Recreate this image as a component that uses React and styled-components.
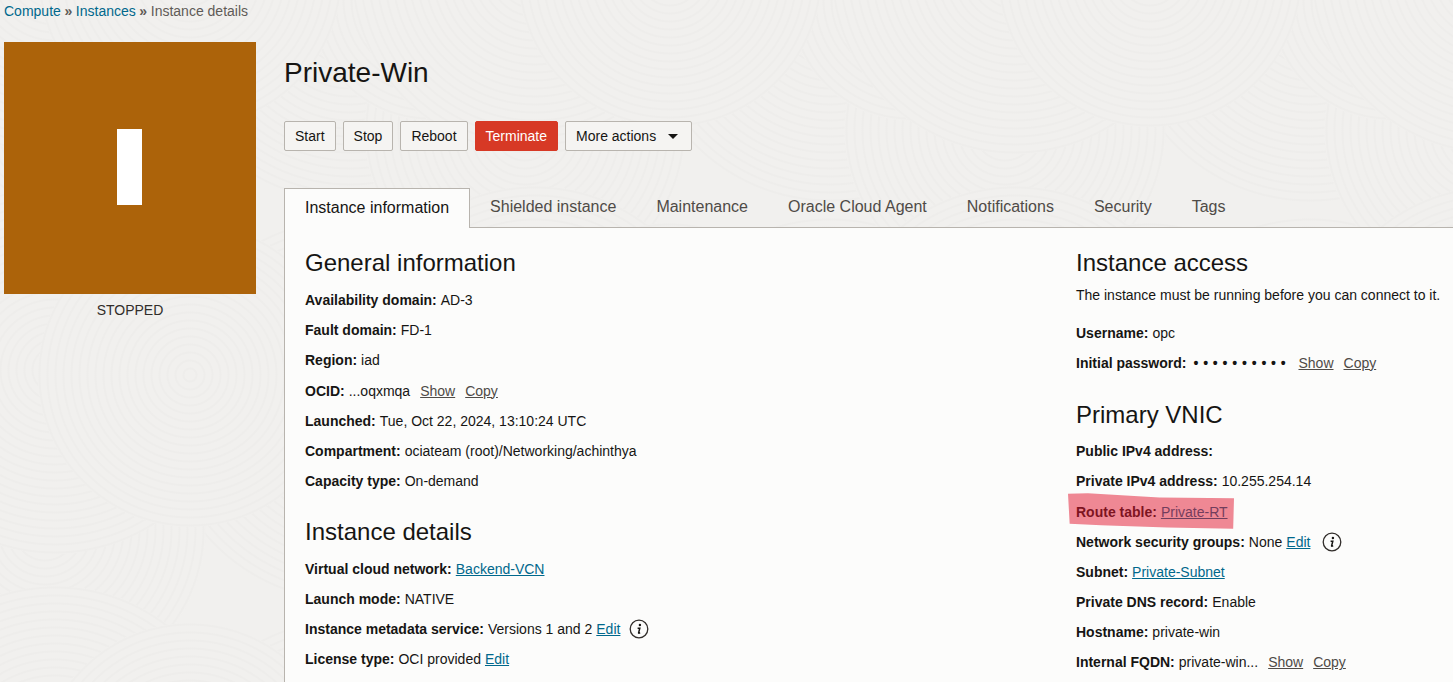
import React from "react";
import styled, { createGlobalStyle } from "styled-components";

// background swirl: opaque disc of faint rings, so later discs sit under earlier ones
const swirl = (radius) => {
  const stops = [];
  for (let r = 0; r < radius; r += 8) {
    stops.push(`#f1f0ee ${r}px ${r + 5}px`, `#eeedeb ${r + 6}px ${r + 7}px`, `#f1f0ee ${r + 8}px`);
  }
  stops.push(`#f1f0ee ${radius}px`, `rgba(241,240,238,0) ${radius + 1}px`);
  return `radial-gradient(circle at center, ${stops.join(", ")})`;
};

const GlobalStyle = createGlobalStyle`
  html, body {
    margin: 0;
    height: 682px;
    overflow: hidden;
  }
  body {
    font-family: "Liberation Sans", Arial, sans-serif;
    font-size: 14px;
    color: #161513;
    background-color: #f1f0ee;
  }
`;

const Page = styled.div`
  height: 682px;
  overflow: hidden;
  display: flex;
  flex-direction: column;
  padding-left: 4px;
  background-color: #f1f0ee;
  background-size: 480px 400px;
  background-image: ${swirl(150)}, ${swirl(180)}, ${swirl(120)}, ${swirl(160)}, ${swirl(190)};
  background-position:
    -50px 175px,
    -185px 170px,
    190px -200px,
    -195px -70px,
    110px -190px;
`;

const Breadcrumbs = styled.nav`
  display: flex;
  align-items: center;
  height: 22px;
  margin-bottom: 20px;
  color: #5f5b57;
  flex: none;
`;

const Crumb = styled.a`
  color: #00688c;
`;

const Chevron = styled.span`
  width: 15px;
  text-align: center;
  font-size: 14px;
  line-height: 14px;
  font-weight: bold;
  color: #5f5b57;
`;

const Columns = styled.div`
  display: flex;
  flex: 1;
  min-height: 0;
`;

const Sidebar = styled.aside`
  width: 252px;
  flex: none;
  margin-right: 28px;
  text-align: center;
`;

const Tile = styled.div`
  height: 252px;
  padding: 0 2px 2px 0;
  box-sizing: border-box;
  background: #ac630a;
  display: flex;
  align-items: center;
  justify-content: center;
`;

const TileBar = styled.div`
  width: 25px;
  height: 76px;
  background: #fff;
`;

const Status = styled.div`
  margin-top: 8px;
  line-height: 16px;
  color: #312d2a;
`;

const Main = styled.main`
  flex: 1;
  min-width: 0;
  display: flex;
  flex-direction: column;
`;

const Title = styled.h1`
  margin: 14px 0 31px;
  font-size: 28px;
  font-weight: 400;
  line-height: 34px;
`;

const Toolbar = styled.div`
  display: flex;
  gap: 7px;
  margin-bottom: 37px;
`;

const Button = styled.button`
  height: 30px;
  padding: 0 10px;
  font: 14px "Liberation Sans", Arial, sans-serif;
  color: ${(p) => (p.$danger ? "#fff" : "#161513")};
  background: ${(p) => (p.$danger ? "#d73925" : "#f5f4f2")};
  border: 1px solid ${(p) => (p.$danger ? "#d73925" : "#b8b4ae")};
  border-radius: 2px;
  display: flex;
  align-items: center;
  gap: 12px;
`;

const Caret = styled.span`
  width: 0;
  height: 0;
  border-left: 5.5px solid transparent;
  border-right: 5.5px solid transparent;
  border-top: 5px solid #161513;
  margin-right: 3px;
`;

const TabBar = styled.div`
  display: flex;
  height: 40px;
  box-sizing: border-box;
  border-bottom: 1px solid #b8b4ae;
  flex: none;
`;

const Tab = styled.div`
  box-sizing: border-box;
  height: ${(p) => (p.$active ? "40px" : "39px")};
  padding: 0 20px;
  font-size: 16px;
  line-height: 38px;
  white-space: nowrap;
  color: ${(p) => (p.$active ? "#161513" : "#4f4b47")};
  background: ${(p) => (p.$active ? "#fcfcfb" : "transparent")};
  border: ${(p) => (p.$active ? "1px solid #b8b4ae" : "0")};
  border-bottom: 0;
`;

const Panel = styled.section`
  flex: 1;
  background: #fcfcfb;
  border-left: 1px solid #b8b4ae;
  display: flex;
  padding: 20px 0 0 20px;
`;

const LeftColumn = styled.div`
  width: 771px;
  flex: none;
`;

const RightColumn = styled.div`
  flex: 1;
  min-width: 0;
`;

const Heading = styled.h2`
  margin: ${(p) => p.$top || 0}px 0 ${(p) => p.$gap ?? 7}px;
  font-size: 24px;
  font-weight: 400;
  line-height: 30px;
`;

const Row = styled.div`
  height: 30.2px;
  line-height: 30.2px;
  white-space: nowrap;
  display: flex;
  align-items: center;
  position: relative;
`;

const Label = styled.b`
  font-weight: 700;
  margin-right: 4px;
`;

const Note = styled.p`
  margin: -1px 0 11.6px;
  height: 22px;
  line-height: 22px;
`;

const TextLink = styled.a`
  color: ${(p) => (p.$muted ? "#4f4b47" : "#00688c")};
  text-decoration: underline;
  margin-left: ${(p) => p.$gap ?? 0}px;
`;

const Dots = styled.span`
  letter-spacing: 4.8px;
  font-weight: 700;
  margin-left: 3px;
`;

const InfoIcon = styled.svg`
  width: 20px;
  height: 20px;
  margin-left: ${(p) => p.$gap}px;
  flex: none;
`;

const Highlight = styled.span`
  position: absolute;
  left: -8px;
  top: -4px;
  width: 166px;
  height: 38px;
  background: rgba(226, 20, 45, 0.5);
  clip-path: polygon(0 3%, 12% 2%, 55% 13%, 100% 15%, 99.5% 95%, 60% 92%, 20% 86%, 1% 82%);
`;

const Info = ({ gap }) => (
  <InfoIcon viewBox="0 0 20 20" $gap={gap}>
    <circle cx="10" cy="10" r="8.8" fill="none" stroke="#312d2a" strokeWidth="1.3" />
    <circle cx="10.9" cy="6" r="1.2" fill="#161513" />
    <path d="M8.6 9.2h2.2l-1.2 4.6c-.1.6.4.6 1.5-.2" fill="none" stroke="#161513" strokeWidth="1.5" />
  </InfoIcon>
);

const tabs = [
  "Instance information",
  "Shielded instance",
  "Maintenance",
  "Oracle Cloud Agent",
  "Notifications",
  "Security",
  "Tags",
];

export default function App() {
  return (
    <Page>
      <GlobalStyle />
      <Breadcrumbs>
        <Crumb>Compute</Crumb>
        <Chevron>»</Chevron>
        <Crumb>Instances</Crumb>
        <Chevron>»</Chevron>
        <span>Instance details</span>
      </Breadcrumbs>
      <Columns>
        <Sidebar>
          <Tile>
            <TileBar />
          </Tile>
          <Status>STOPPED</Status>
        </Sidebar>
        <Main>
          <Title>Private-Win</Title>
          <Toolbar>
            <Button>Start</Button>
            <Button>Stop</Button>
            <Button>Reboot</Button>
            <Button $danger>Terminate</Button>
            <Button>
              More actions <Caret />
            </Button>
          </Toolbar>
          <TabBar>
            {tabs.map((t, i) => (
              <Tab key={t} $active={i === 0}>
                {t}
              </Tab>
            ))}
          </TabBar>
          <Panel>
            <LeftColumn>
              <Heading>General information</Heading>
              <Row><Label>Availability domain:</Label><span>AD-3</span></Row>
              <Row><Label>Fault domain:</Label><span>FD-1</span></Row>
              <Row><Label>Region:</Label><span>iad</span></Row>
              <Row>
                <Label>OCID:</Label><span>...oqxmqa</span>
                <TextLink $muted $gap={10}>Show</TextLink>
                <TextLink $muted $gap={10}>Copy</TextLink>
              </Row>
              <Row><Label>Launched:</Label><span>Tue, Oct 22, 2024, 13:10:24 UTC</span></Row>
              <Row><Label>Compartment:</Label><span>ociateam (root)/Networking/achinthya</span></Row>
              <Row><Label>Capacity type:</Label><span>On-demand</span></Row>
              <Heading $top={21} $gap={6.5}>Instance details</Heading>
              <Row><Label>Virtual cloud network:</Label><TextLink>Backend-VCN</TextLink></Row>
              <Row><Label>Launch mode:</Label><span>NATIVE</span></Row>
              <Row>
                <Label>Instance metadata service:</Label><span>Versions 1 and 2</span>
                <TextLink $gap={4}>Edit</TextLink>
                <Info gap={9} />
              </Row>
              <Row><Label>License type:</Label><span>OCI provided</span><TextLink $gap={4}>Edit</TextLink></Row>
            </LeftColumn>
            <RightColumn>
              <Heading>Instance access</Heading>
              <Note>The instance must be running before you can connect to it.</Note>
              <Row><Label>Username:</Label><span>opc</span></Row>
              <Row>
                <Label>Initial password:</Label><Dots>••••••••••</Dots>
                <TextLink $muted $gap={8}>Show</TextLink>
                <TextLink $muted $gap={10}>Copy</TextLink>
              </Row>
              <Heading $top={21.6} $gap={6.6}>Primary VNIC</Heading>
              <Row><Label>Public IPv4 address:</Label></Row>
              <Row><Label>Private IPv4 address:</Label><span>10.255.254.14</span></Row>
              <Row>
                <Label>Route table:</Label><TextLink>Private-RT</TextLink>
                <Highlight />
              </Row>
              <Row>
                <Label>Network security groups:</Label><span>None</span>
                <TextLink $gap={4}>Edit</TextLink>
                <Info gap={12} />
              </Row>
              <Row><Label>Subnet:</Label><TextLink>Private-Subnet</TextLink></Row>
              <Row><Label>Private DNS record:</Label><span>Enable</span></Row>
              <Row><Label>Hostname:</Label><span>private-win</span></Row>
              <Row>
                <Label>Internal FQDN:</Label><span>private-win...</span>
                <TextLink $muted $gap={10}>Show</TextLink>
                <TextLink $muted $gap={10}>Copy</TextLink>
              </Row>
            </RightColumn>
          </Panel>
        </Main>
      </Columns>
    </Page>
  );
}
